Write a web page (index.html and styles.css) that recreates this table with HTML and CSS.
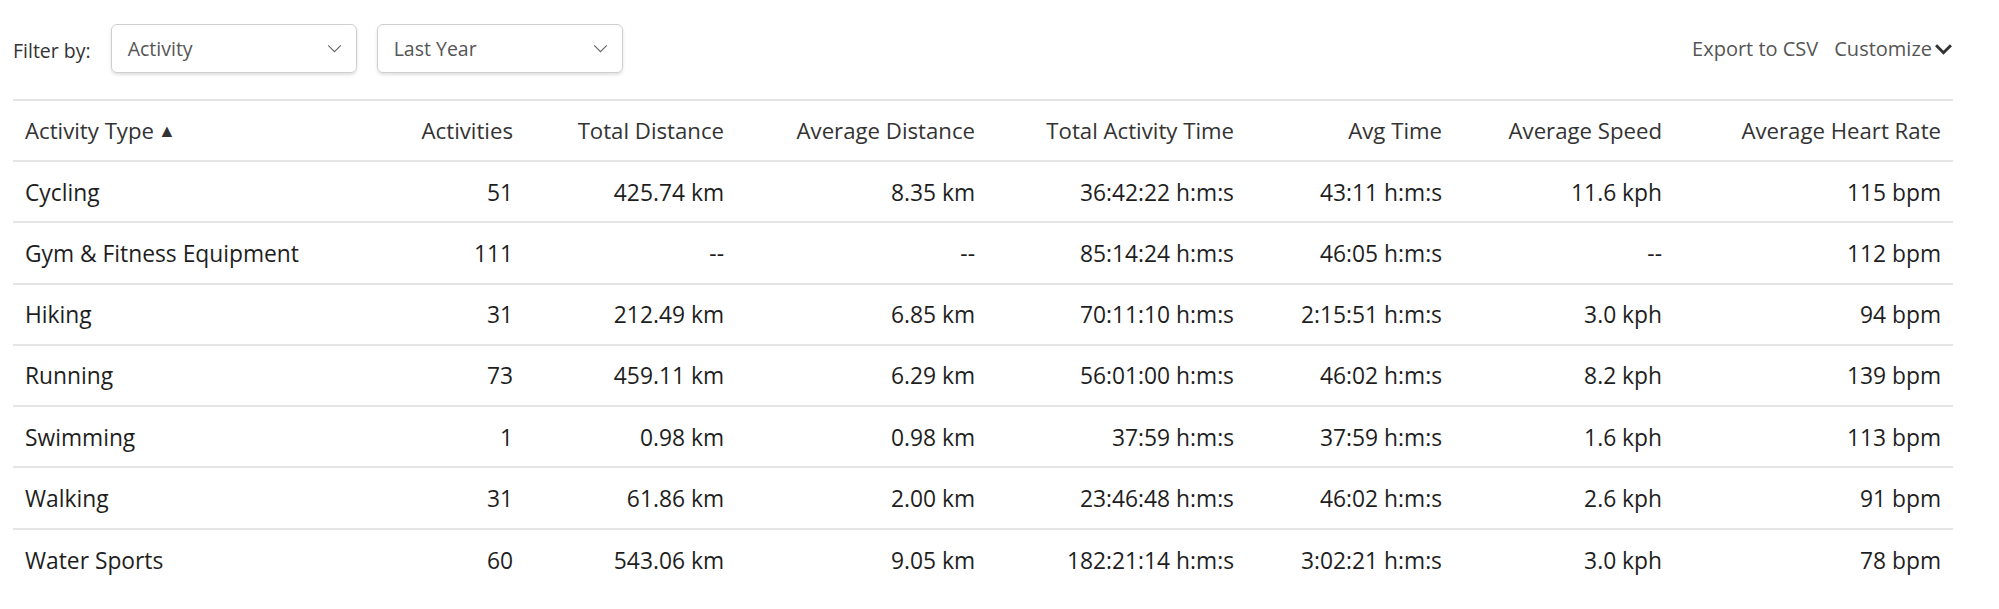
FILE: index.html
```html
<!DOCTYPE html>
<html>
<head>
<meta charset="utf-8">
<link rel="stylesheet" href="styles.css">
</head>
<body>
<div class="page">
  <div class="toolbar">
    <div class="filters">
      <span class="filter-label">Filter by:</span>
      <div class="select select-activity"><span>Activity</span>
        <svg class="select-chev" viewBox="0 0 16 10" width="15" height="9"><path d="M1 1.5 L8 8.5 L15 1.5" fill="none" stroke="#666" stroke-width="1.3"/></svg>
      </div>
      <div class="select select-period"><span>Last Year</span>
        <svg class="select-chev" viewBox="0 0 16 10" width="15" height="9"><path d="M1 1.5 L8 8.5 L15 1.5" fill="none" stroke="#666" stroke-width="1.3"/></svg>
      </div>
    </div>
    <div class="actions">
      <span class="action">Export to CSV</span>
      <span class="action customize">Customize<svg class="cust-chev" viewBox="0 0 20 14" width="19" height="13"><path d="M2 2.5 L10 10.5 L18 2.5" fill="none" stroke="#333" stroke-width="3.2"/></svg></span>
    </div>
  </div>
  <table class="stats">
    <thead>
      <tr>
        <th class="left c1">Activity Type<span class="sort">▲</span></th>
        <th class="c2">Activities</th>
        <th class="c3">Total Distance</th>
        <th class="c4">Average Distance</th>
        <th class="c5">Total Activity Time</th>
        <th class="c6">Avg Time</th>
        <th class="c7">Average Speed</th>
        <th class="c8">Average Heart Rate</th>
      </tr>
    </thead>
    <tbody>
      <tr><td class="left">Cycling</td><td>51</td><td>425.74 km</td><td>8.35 km</td><td>36:42:22 h:m:s</td><td>43:11 h:m:s</td><td>11.6 kph</td><td>115 bpm</td></tr>
      <tr><td class="left">Gym &amp; Fitness Equipment</td><td>111</td><td>--</td><td>--</td><td>85:14:24 h:m:s</td><td>46:05 h:m:s</td><td>--</td><td>112 bpm</td></tr>
      <tr><td class="left">Hiking</td><td>31</td><td>212.49 km</td><td>6.85 km</td><td>70:11:10 h:m:s</td><td>2:15:51 h:m:s</td><td>3.0 kph</td><td>94 bpm</td></tr>
      <tr><td class="left">Running</td><td>73</td><td>459.11 km</td><td>6.29 km</td><td>56:01:00 h:m:s</td><td>46:02 h:m:s</td><td>8.2 kph</td><td>139 bpm</td></tr>
      <tr><td class="left">Swimming</td><td>1</td><td>0.98 km</td><td>0.98 km</td><td>37:59 h:m:s</td><td>37:59 h:m:s</td><td>1.6 kph</td><td>113 bpm</td></tr>
      <tr><td class="left">Walking</td><td>31</td><td>61.86 km</td><td>2.00 km</td><td>23:46:48 h:m:s</td><td>46:02 h:m:s</td><td>2.6 kph</td><td>91 bpm</td></tr>
      <tr><td class="left">Water Sports</td><td>60</td><td>543.06 km</td><td>9.05 km</td><td>182:21:14 h:m:s</td><td>3:02:21 h:m:s</td><td>3.0 kph</td><td>78 bpm</td></tr>
    </tbody>
  </table>
</div>
</body>
</html>
```

FILE: styles.css
```css
html, body {
  margin: 0;
  padding: 0;
  background: #fff;
}
body {
  font-family: "Open Sans", "Noto Sans", sans-serif;
  color: #1e1e1e;
}
.page {
  padding: 24px 46px 0 13px;
}
.toolbar {
  display: flex;
  justify-content: space-between;
  align-items: center;
  height: 49px;
  margin-bottom: 26px;
}
.filters {
  display: flex;
  align-items: center;
}
.filter-label {
  font-size: 19.5px;
  color: #333;
  margin-right: 20px;
  padding-top: 4px;
}
.select {
  box-sizing: border-box;
  width: 246px;
  height: 49px;
  border: 1px solid #cfcfcf;
  border-radius: 6px;
  box-shadow: 0 2px 3px rgba(0,0,0,0.12);
  display: flex;
  align-items: center;
  justify-content: space-between;
  padding: 0 14px 0 16px;
  font-size: 19.5px;
  color: #555;
  margin-right: 20px;
}
.select-chev {
  display: block;
}
.actions {
  display: flex;
  align-items: center;
  font-size: 20px;
  color: #555;
}
.action + .action {
  margin-left: 16px;
}
.customize {
  display: flex;
  align-items: center;
}
.cust-chev {
  margin-left: 2px;
  margin-top: 1px;
}
.stats {
  width: 1940px;
  border-collapse: collapse;
  table-layout: fixed;
  font-size: 22.8px;
}
.stats th, .stats td {
  box-sizing: border-box;
  text-align: right;
  padding: 1px 12px 0;
  height: 61.25px;
  white-space: nowrap;
  border-bottom: 2px solid #e5e5e5;
}
.stats th {
  font-weight: normal;
  font-size: 22.2px;
  padding-top: 0;
  height: 61px;
  color: #333;
  border-top: 2px solid #e5e5e5;
}
.stats th.c1 { width: 380px; }
.stats th.c2 { width: 132px; }
.stats th.c3 { width: 211px; }
.stats th.c4 { width: 251px; }
.stats th.c5 { width: 259px; }
.stats th.c6 { width: 208px; }
.stats th.c7 { width: 220px; }
.stats th.c8 { width: 279px; }
.stats tbody tr:last-child td {
  border-bottom: none;
}
.stats .left {
  text-align: left;
}
.sort {
  font-size: 18px;
  margin-left: 4px;
  position: relative;
  top: -2px;
}
```
